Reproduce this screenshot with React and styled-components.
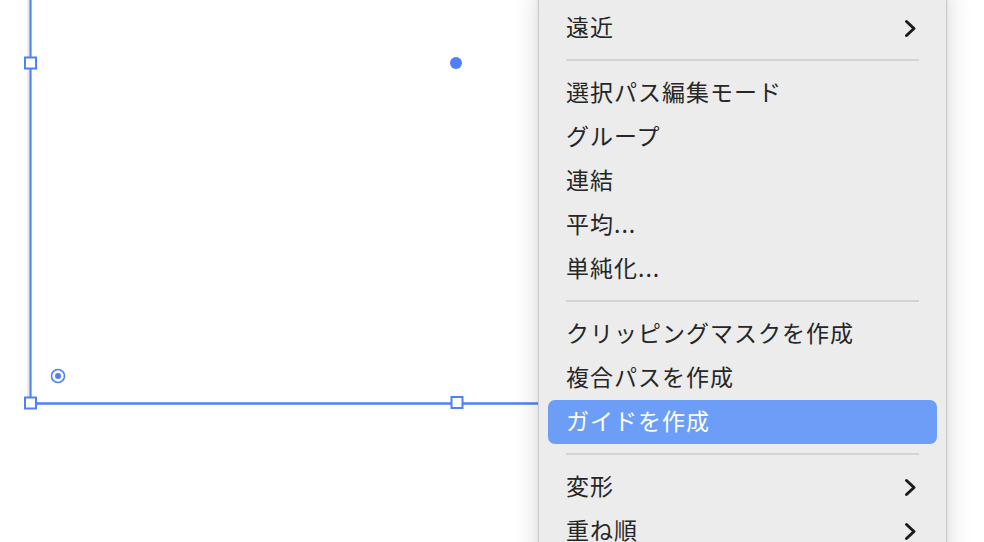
import React from "react";
import styled, { createGlobalStyle } from "styled-components";

const Global = createGlobalStyle`
  html, body { margin: 0; padding: 0; background: #ffffff; }
  body { width: 984px; height: 542px; overflow: hidden; }
  * { box-sizing: border-box; }
`;

const Stage = styled.div`
  position: relative;
  width: 984px;
  height: 542px;
  overflow: hidden;
  background: #ffffff;
  font-family: "Noto Sans CJK JP", "Noto Sans", sans-serif;
`;

const Drawing = styled.svg`
  display: block;
  width: 984px;
  height: 542px;
`;

const Menu = styled.div`
  position: absolute;
  left: 538px;
  top: -12px;
  width: 409px;
  padding: 17px 9px 20px;
  background: #ececec;
  border: 1px solid rgba(0, 0, 0, 0.14);
  border-radius: 10px;
  box-shadow: 0 0 26px rgba(0, 0, 0, 0.16), 0 0 4px rgba(0, 0, 0, 0.06);
  display: flex;
  flex-direction: column;
`;

const Item = styled.div`
  height: 44px;
  padding: 0 20px 4px 18px;
  display: flex;
  align-items: center;
  justify-content: space-between;
  border-radius: 7px;
  font-size: 23px;
  letter-spacing: 1px;
  color: ${(p) => (p.$active ? "#ffffff" : "#262626")};
  background: ${(p) => (p.$active ? "#6c9ef8" : "transparent")};
`;

const Label = styled.span`
  white-space: nowrap;
  line-height: 1;
`;

const Separator = styled.div`
  height: 21px;
  padding: 9px 18px 0;
  &::after {
    content: "";
    display: block;
    height: 2px;
    background: #d4d4d4;
  }
`;

const ChevronWrap = styled.span`
  display: flex;
  margin-top: 4px;
`;

const Chevron = () => (
  <ChevronWrap>
    <svg width="13" height="19" viewBox="0 0 13 19">
      <path
        d="M2.5 2.5 L10 9.5 L2.5 16.5"
        fill="none"
        stroke="#1c1c1c"
        strokeWidth="3"
        strokeLinecap="round"
        strokeLinejoin="round"
      />
    </svg>
  </ChevronWrap>
);

const items = [
  { label: "遠近", sub: true },
  "sep",
  { label: "選択パス編集モード" },
  { label: "グループ" },
  { label: "連結" },
  { label: "平均..." },
  { label: "単純化..." },
  "sep",
  { label: "クリッピングマスクを作成" },
  { label: "複合パスを作成" },
  { label: "ガイドを作成", active: true },
  "sep",
  { label: "変形", sub: true },
  { label: "重ね順", sub: true },
];

const BLUE = "#4f80f5";

const Handle = ({ x, y }) => (
  <rect x={x - 5.5} y={y - 5.5} width="11" height="11" fill="#fff" stroke={BLUE} strokeWidth="2" />
);

export default function App() {
  return (
    <>
      <Global />
      <Stage>
        <Drawing viewBox="0 0 984 542">
          <line x1="28" y1="0" x2="28" y2="402" stroke="#d6d6d6" strokeWidth="1" />
          <line x1="30.5" y1="0" x2="30.5" y2="404" stroke={BLUE} strokeWidth="2.2" />
          <line x1="30" y1="403.5" x2="545" y2="403.5" stroke={BLUE} strokeWidth="2.4" />
          <Handle x={30.5} y={63} />
          <Handle x={30.5} y={403} />
          <Handle x={457} y={402.5} />
          <circle cx="456" cy="63" r="6" fill={BLUE} />
          <circle cx="58" cy="376" r="6.5" fill="#fff" stroke={BLUE} strokeWidth="1.6" />
          <circle cx="58" cy="376" r="3" fill={BLUE} />
        </Drawing>
        <Menu>
          {items.map((it, i) =>
            it === "sep" ? (
              <Separator key={i} />
            ) : (
              <Item key={i} $active={it.active}>
                <Label>{it.label}</Label>
                {it.sub && <Chevron />}
              </Item>
            )
          )}
        </Menu>
      </Stage>
    </>
  );
}
